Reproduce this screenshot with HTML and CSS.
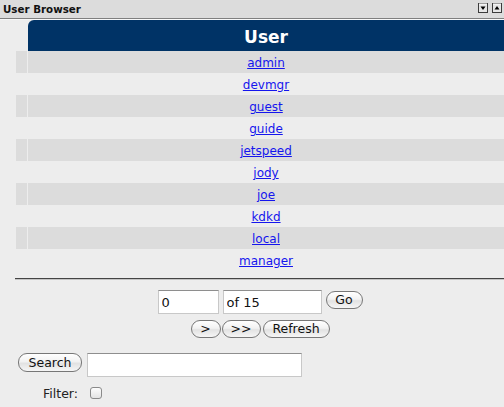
FILE: index.html
```html
<!DOCTYPE html>
<html>
<head>
<meta charset="utf-8">
<link rel="stylesheet" href="styles.css">
</head>
<body>
<div class="titlebar">
  <span class="title">User Browser</span>
  <div class="winbtns">
    <span class="wbtn"><svg width="10" height="10" viewBox="0 0 10 10"><rect x="0.5" y="0.5" width="9" height="9" fill="#e6e6e6" stroke="#3c3c3c"/><path d="M1 1H9" stroke="#fff"/><path d="M2.5 3.5H7.5L5 7Z" fill="#000"/></svg></span>
    <span class="wbtn"><svg width="10" height="10" viewBox="0 0 10 10"><rect x="0.5" y="0.5" width="9" height="9" fill="#e6e6e6" stroke="#3c3c3c"/><path d="M1 1H9" stroke="#fff"/><path d="M2.5 6.5H7.5L5 3Z" fill="#000"/></svg></span>
  </div>
</div>
<div class="panel">
  <div class="grid">
    <div class="hblank"></div><div class="head">User</div>
    <div class="c0 odd"></div><div class="c1 odd"><a href="#">admin</a></div>
    <div class="c0"></div><div class="c1"><a href="#">devmgr</a></div>
    <div class="c0 odd"></div><div class="c1 odd"><a href="#">guest</a></div>
    <div class="c0"></div><div class="c1"><a href="#">guide</a></div>
    <div class="c0 odd"></div><div class="c1 odd"><a href="#">jetspeed</a></div>
    <div class="c0"></div><div class="c1"><a href="#">jody</a></div>
    <div class="c0 odd"></div><div class="c1 odd"><a href="#">joe</a></div>
    <div class="c0"></div><div class="c1"><a href="#">kdkd</a></div>
    <div class="c0 odd"></div><div class="c1 odd"><a href="#">local</a></div>
    <div class="c0"></div><div class="c1"><a href="#">manager</a></div>
  </div>
  <div class="rule"></div>
  <div class="pager">
    <input class="field num" type="text" value="0">
    <input class="field of" type="text" value="of 15">
    <button class="btn go">Go</button>
  </div>
  <div class="pager2">
    <button class="btn next">&gt;</button>
    <button class="btn last">&gt;&gt;</button>
    <button class="btn refresh">Refresh</button>
  </div>
  <div class="searchrow">
    <button class="btn search">Search</button>
    <input class="field query" type="text" value="">
  </div>
  <div class="filterrow">
    <span class="flabel">Filter:</span>
    <input class="chk" type="checkbox">
  </div>
</div>
</body>
</html>
```

FILE: styles.css
```css
html, body {
  margin: 0;
  padding: 0;
  background: #ededed;
  height: 100%;
}
body {
  font-family: "DejaVu Sans", Verdana, sans-serif;
  overflow: hidden;
}
.titlebar {
  height: 19px;
  box-sizing: border-box;
  background: #dcdcdc;
  border-bottom: 1px solid #7f7f7f;
  display: flex;
  align-items: center;
  justify-content: space-between;
  padding: 0 2px 0 3px;
}
.title {
  font-weight: bold;
  font-size: 10.3px;
  color: #111;
  margin-top: -1px;
}
.winbtns {
  display: flex;
  gap: 4px;
  margin-top: -2px;
}
.wbtn {
  display: block;
  width: 10px;
  height: 10px;
}
.wbtn svg { display: block; }
.panel {
  border-top: 1px solid #f8f8f8;
}
.grid {
  display: grid;
  grid-template-columns: 11px 1fr;
  column-gap: 1px;
  margin-left: 16px;
}
.hblank { height: 31px; }
.head {
  height: 31px;
  box-sizing: border-box;
  background: #003366;
  border-top-left-radius: 6px;
  color: #fff;
  font-weight: bold;
  font-size: 17px;
  text-align: center;
  padding-top: 3px;
  line-height: 28px;
}
.c0 {
  height: 22px;
}
.odd { background: #dcdcdc; }
.c1 {
  height: 22px;
  box-sizing: border-box;
  padding-top: 1px;
  line-height: 22px;
  text-align: center;
  font-size: 12px;
}
.c1 a { color: #1515ee; }
.rule {
  margin: 7px 0 0 15px;
  border-top: 1px solid #444;
  border-bottom: 1px solid #c4c4c4;
}
.pager {
  margin: 10px 0 0 16px;
  display: flex;
  justify-content: center;
  align-items: flex-start;
  gap: 4px;
}
.field {
  box-sizing: border-box;
  height: 24px;
  border: 1px solid #c8c8c8;
  border-top-color: #8e8e8e;
  background: #fff;
  font-family: "DejaVu Sans", Verdana, sans-serif;
  font-size: 13px;
  color: #111;
  padding: 0 3px;
  margin: 0;
  outline: none;
}
.num { width: 61px; }
.of { width: 99px; }
.btn {
  box-sizing: border-box;
  height: 18px;
  margin: 0;
  padding: 0;
  border: 1px solid #777;
  border-radius: 9px;
  background: linear-gradient(#ffffff, #f2f2f2 45%, #e2e2e2 55%, #f6f6f6);
  font-family: "DejaVu Sans", Verdana, sans-serif;
  font-size: 12.5px;
  color: #111;
  line-height: 16px;
}
.go { width: 37px; margin-top: 1px; }
.pager2 {
  margin: 6px 0 0 16px;
  display: flex;
  justify-content: center;
  gap: 1px;
}
.next { width: 30px; }
.last { width: 39px; }
.refresh { width: 67px; margin-left: 1px; }
.searchrow {
  margin: 15px 0 0 18px;
  display: flex;
  align-items: flex-start;
  gap: 5px;
}
.search { width: 64px; height: 19px; }
.query { width: 215px; }
.filterrow {
  margin-top: 10px;
  padding-left: 43px;
  display: flex;
  align-items: center;
  height: 12px;
}
.flabel {
  font-size: 12.5px;
  color: #222;
}
.chk {
  appearance: none;
  -webkit-appearance: none;
  box-sizing: border-box;
  width: 12px;
  height: 12px;
  margin: 0 0 0 12px;
  border: 1px solid #8a8a8a;
  border-radius: 3px;
  background: linear-gradient(#fdfdfd, #e4e4e4);
}
```
